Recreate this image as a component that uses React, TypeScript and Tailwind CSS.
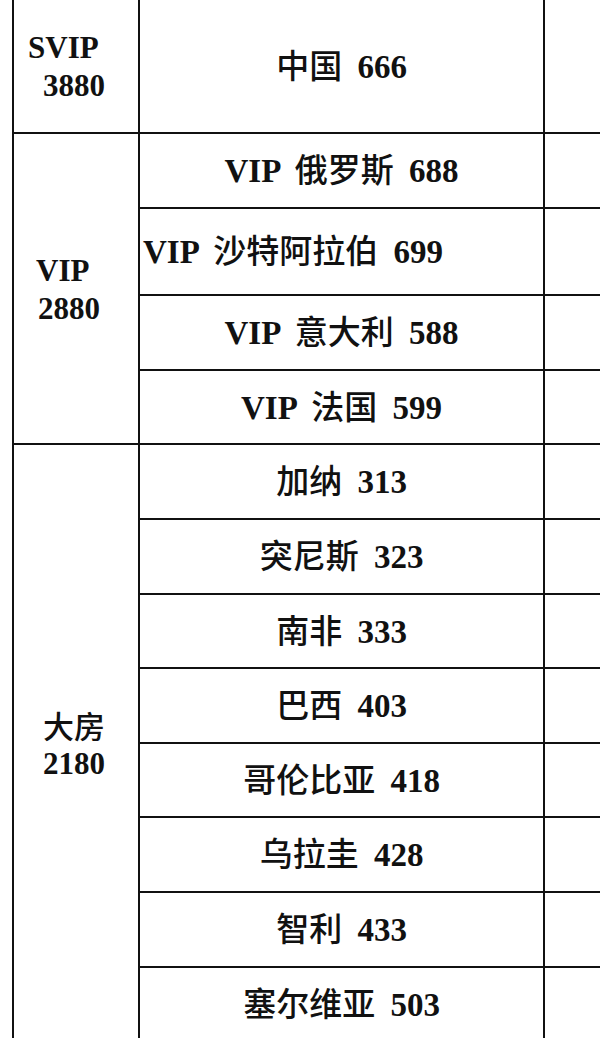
import React from "react";

function Label({ text }: { text: string }) {
  const parts = text.split(/([\u3400-\u9fff]+)/).filter((p) => p.length > 0);
  return (
    <span className="whitespace-pre [word-spacing:7px]">
      {parts.map((p, i) =>
        /[\u3400-\u9fff]/.test(p) ? (
          <span
            key={i}
            className="font-['Noto_Sans_CJK_SC',sans-serif] font-medium text-[33px]"
          >
            {p}
          </span>
        ) : (
          <span
            key={i}
            className="font-['Liberation_Serif','Noto_Sans_CJK_SC',serif] font-bold text-[33px]"
          >
            {p}
          </span>
        )
      )}
    </span>
  );
}

const midRows: { text: string; left?: boolean }[] = [
  { text: "中国 666" },
  { text: "VIP 俄罗斯 688" },
  { text: "VIP 沙特阿拉伯 699", left: true },
  { text: "VIP 意大利 588" },
  { text: "VIP 法国 599" },
  { text: "加纳 313" },
  { text: "突尼斯 323" },
  { text: "南非 333" },
  { text: "巴西 403" },
  { text: "哥伦比亚 418" },
  { text: "乌拉圭 428" },
  { text: "智利 433" },
  { text: "塞尔维亚 503" },
];

const rowStarts = [
  "row-start-1",
  "row-start-2",
  "row-start-3",
  "row-start-4",
  "row-start-5",
  "row-start-6",
  "row-start-7",
  "row-start-8",
  "row-start-9",
  "row-start-10",
  "row-start-11",
  "row-start-12",
  "row-start-13",
];

export default function App() {
  return (
    <div className="w-[600px] h-[1038px] overflow-hidden bg-white text-[#111]">
      <div className="ml-[12px] border-l-2 border-[#111]">
        <div className="grid grid-cols-[126px_405px_1fr] grid-rows-[134px_75px_87px_75px_74px_75px_75px_74px_75px_74px_75px_75px_74px]">
          {/* Left column */}
          <div className="col-start-1 row-start-1 row-span-1 border-r-2 border-b-2 border-[#111] flex flex-col justify-center pt-[1px]">
            <div className="pl-[14px] font-['Liberation_Serif',serif] font-bold text-[31px] leading-[38px]">SVIP</div>
            <div className="pl-[29px] font-['Liberation_Serif',serif] font-bold text-[31px] leading-[38px]">3880</div>
          </div>
          <div className="col-start-1 row-start-2 row-span-4 border-r-2 border-b-2 border-[#111] flex flex-col justify-center pt-[2px]">
            <div className="pl-[22px] font-['Liberation_Serif',serif] font-bold text-[31px] leading-[38px]">VIP</div>
            <div className="pl-[24px] font-['Liberation_Serif',serif] font-bold text-[31px] leading-[38px]">2880</div>
          </div>
          <div className="col-start-1 row-start-6 row-span-8 border-r-2 border-b-2 border-[#111] flex flex-col justify-center pt-[2px]">
            <div className="pl-[29px] font-['Noto_Sans_CJK_SC',sans-serif] font-medium text-[31px] leading-[40px]">大房</div>
            <div className="pl-[29px] font-['Liberation_Serif',serif] font-bold text-[31px] leading-[38px]">2180</div>
          </div>

          {/* Middle column */}
          {midRows.map((r, i) => (
            <div
              key={i}
              className={`col-start-2 ${rowStarts[i]} border-r-2 border-b-2 border-[#111] flex items-center ${
                r.left ? "justify-start pl-[3px]" : "justify-center"
              }`}
            >
              <Label text={r.text} />
            </div>
          ))}

          {/* Right column */}
          {midRows.map((_, i) => (
            <div key={i} className={`col-start-3 ${rowStarts[i]} border-b-2 border-[#111]`} />
          ))}
        </div>
      </div>
    </div>
  );
}
